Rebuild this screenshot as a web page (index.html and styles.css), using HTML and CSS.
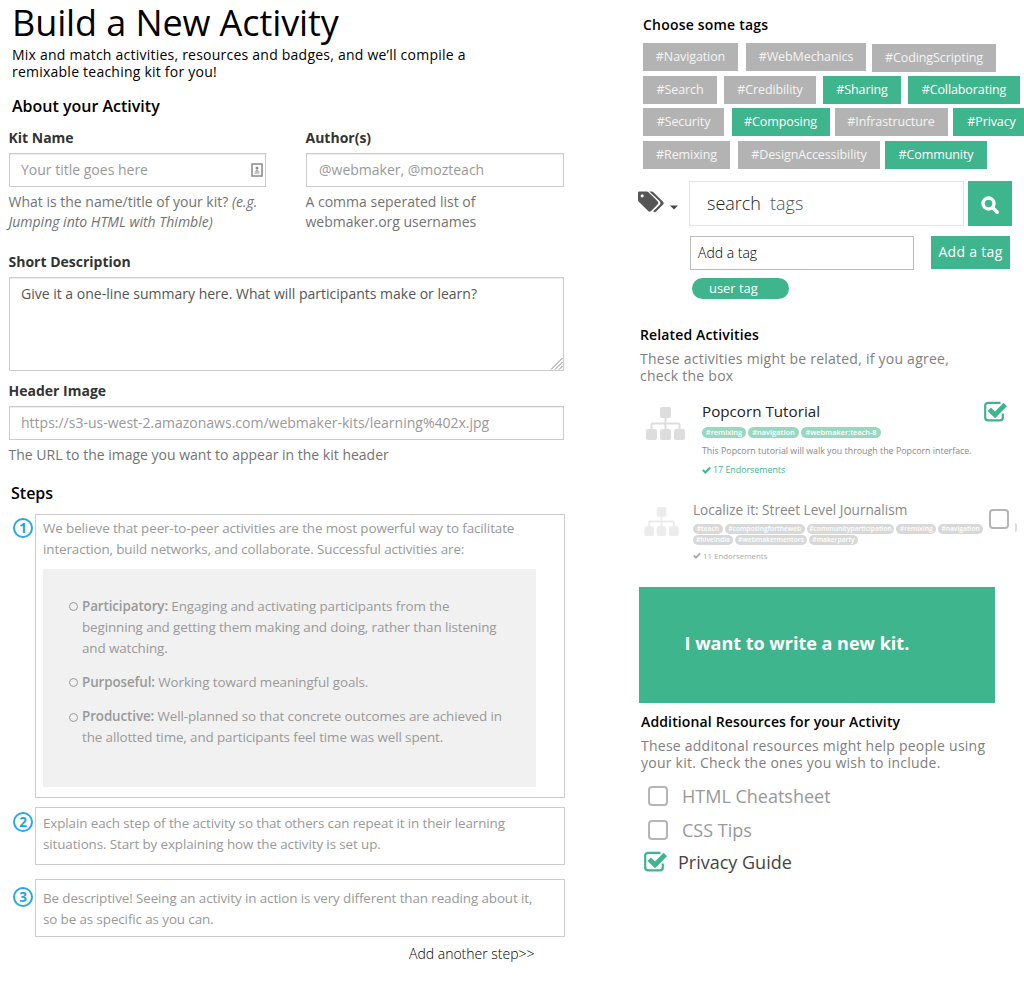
FILE: index.html
```html
<!DOCTYPE html>
<html lang="en">
<head>
<meta charset="utf-8">
<title>Build a New Activity</title>
<link rel="stylesheet" href="styles.css">
</head>
<body>
<svg class="defs" width="0" height="0" aria-hidden="true">
  <symbol id="sitemap" viewBox="0 0 39 33">
    <rect x="14" y="0" width="11" height="11" rx="2"/><rect x="0" y="22" width="11" height="11" rx="2"/><rect x="14" y="22" width="11" height="11" rx="2"/><rect x="28" y="22" width="11" height="11" rx="2"/>
    <path d="M19.500 10v13M5.500 23v-5.500q0-1 1-1h26q1 0 1 1v5.500" fill="none" stroke="currentColor" stroke-width="2"/>
  </symbol>
  <symbol id="checked" viewBox="0 0 24 21">
    <path d="M16.500 1.800H4.200Q1.200 1.800 1.200 4.600v11.900q0 2.800 3 2.800h11.800q2.800 0 2.800-2.800V12.500" fill="none" stroke="currentColor" stroke-width="2.200"/>
    <path d="M5.300 8.300L11 13.900 21.300 3.500" fill="none" stroke="currentColor" stroke-width="4.700"/>
  </symbol>
  <symbol id="tick" viewBox="0 0 8 7"><path d="M.8 3.500L3 5.700 7.200 1.300" fill="none" stroke="currentColor" stroke-width="1.800"/></symbol>
</svg>
<div class="page">
  <main class="builder">
    <h1 class="title">Build a New Activity</h1>
    <p class="intro">Mix and match activities, resources and badges, and we’ll compile a<br>remixable teaching kit for you!</p>
    <h2 class="section about">About your Activity</h2>
    <div class="field-row">
      <div class="field">
        <label class="label">Kit Name</label>
        <div class="input">Your title goes here
          <svg class="card-icon" width="12" height="14" viewBox="0 0 12 14"><rect x="1" y="1" width="10" height="12" fill="none" stroke="#888" stroke-width="1.500"/><circle cx="6" cy="5" r="1.500" fill="#888"/><path d="M3.500 8.500q2.500-3 5 0zM3.500 9.500h5v1h-5z" fill="#888"/></svg>
        </div>
        <p class="help">What is the name/title of your kit? <em>(e.g.<br>Jumping into HTML with Thimble)</em></p>
      </div>
      <div class="field author">
        <label class="label">Author(s)</label>
        <div class="input">@webmaker, @mozteach</div>
        <p class="help">A comma seperated list of<br>webmaker.org usernames</p>
      </div>
    </div>
    <div class="field summary">
      <label class="label">Short Description</label>
      <div class="input textarea">Give it a one-line summary here. What will participants make or learn?
        <svg class="grip" width="13" height="13" viewBox="0 0 13 13"><path d="M1 12.500L12.500 1M5 12.500L12.500 5M9 12.500L12.500 9" stroke="#888" fill="none"/></svg>
      </div>
    </div>
    <div class="field header-image">
      <label class="label">Header Image</label>
      <div class="input">https://s3-us-west-2.amazonaws.com/webmaker-kits/learning%402x.jpg</div>
      <p class="help">The URL to the image you want to appear in the kit header</p>
    </div>
    <h2 class="section steps-title">Steps</h2>
    <div class="steps">
      <div class="step first">
        <span class="num">1</span>
        <div class="step-box">
          <p>We believe that peer-to-peer activities are the most powerful way to facilitate<br>interaction, build networks, and collaborate. Successful activities are:</p>
          <ul class="traits">
            <li><b>Participatory:</b> Engaging and activating participants from the<br>beginning and getting them making and doing, rather than listening<br>and watching.</li>
            <li><b>Purposeful:</b> Working toward meaningful goals.</li>
            <li><b>Productive:</b> Well-planned so that concrete outcomes are achieved in<br>the allotted time, and participants feel time was well spent.</li>
          </ul>
        </div>
      </div>
      <div class="step second">
        <span class="num">2</span>
        <div class="step-box"><p>Explain each step of the activity so that others can repeat it in their learning<br>situations. Start by explaining how the activity is set up.</p></div>
      </div>
      <div class="step third">
        <span class="num">3</span>
        <div class="step-box"><p>Be descriptive! Seeing an activity in action is very different than reading about it,<br>so be as specific as you can.</p></div>
      </div>
    </div>
    <a class="add-step">Add another step&gt;&gt;</a>
  </main>

  <aside class="side">
    <h3 class="side-title choose">Choose some tags</h3>
    <div class="tags">
      <div class="tag-row top"><span class="tag w95">#Navigation</span><span class="tag w120">#WebMechanics</span><span class="tag w124">#CodingScripting</span></div>
      <div class="tag-row"><span class="tag w74">#Search</span><span class="tag w92">#Credibility</span><span class="tag w78 on">#Sharing</span><span class="tag w112 on">#Collaborating</span></div>
      <div class="tag-row"><span class="tag w81">#Security</span><span class="tag w98 on">#Composing</span><span class="tag w113">#Infrastructure</span><span class="tag w78 on privacy">#Privacy</span></div>
      <div class="tag-row last"><span class="tag w87">#Remixing</span><span class="tag w142">#DesignAccessibility</span><span class="tag w102 on">#Community</span></div>
    </div>
    <div class="search">
      <svg class="tags-icon" width="41" height="24" viewBox="0 0 41 24">
        <path d="M1.300 1.500Q0 1.500 0 2.800v7q0 1 .8 1.900l9.400 9.400q1.400 1.400 2.800 0l6.800-6.800q1.400-1.400 0-2.800l-9.300-9.200Q9.700 1.500 8.700 1.500zM4.200 4.200a1.500 1.500 0 1 1 0 3.200a1.500 1.500 0 1 1 0-3.200z" fill="#555" fill-rule="evenodd"/>
        <path d="M11.300 1.500h2.400q1 0 1.700.7l9.700 9.500q1.400 1.400 0 2.800l-7 7q-1.200 1.200-2.500.1l-.4-.4 6.300-6.200q2-2 0-3.900z" fill="#555"/>
        <path d="M32 15.500h8l-4 4z" fill="#444"/>
      </svg>
      <div class="search-input"><span>search</span><span class="dim">tags</span></div>
      <div class="search-btn"><svg width="19" height="19" viewBox="0 0 19 19"><circle cx="7.500" cy="7.500" r="5.500" fill="none" stroke="#fff" stroke-width="3.400"/><path d="M11.500 11.500l4.700 4.700" stroke="#fff" stroke-width="3.600" stroke-linecap="round"/></svg></div>
    </div>
    <div class="add-tag"><div class="add-input">Add a tag</div><div class="add-btn">Add a tag</div></div>
    <span class="user-tag">user tag</span>

    <h3 class="side-title related">Related Activities</h3>
    <p class="side-text">These activities might be related, if you agree,<br>check the box</p>
    <article class="activity one">
      <svg class="map" width="39" height="33"><use href="#sitemap"/></svg>
      <div class="info">
        <h4 class="act-title">Popcorn Tutorial</h4>
        <div class="pills"><span class="p44">#remixing</span><span class="p51">#navigation</span><span class="p80">#webmaker:teach-8</span></div>
        <p class="act-text">This Popcorn tutorial will walk you through the Popcorn interface.</p>
        <p class="endorse"><svg width="9" height="8"><use href="#tick"/></svg>17 Endorsements</p>
      </div>
      <svg class="check" width="24" height="21"><use href="#checked"/></svg>
    </article>
    <article class="activity two">
      <svg class="map" width="35" height="29"><use href="#sitemap"/></svg>
      <div class="info">
        <h4 class="act-title">Localize it: Street Level Journalism</h4>
        <div class="pills"><span class="p30">#teach</span><span class="p80">#composingfortheweb</span><span class="p88">#communityparticipation</span><span class="p40">#remixing</span><span class="p45">#navigation</span></div>
        <div class="pills"><span class="p40">#hiveindia</span><span class="p72">#webmakermentors</span><span class="p49">#makerparty</span></div>
        <p class="endorse"><svg width="8" height="7"><use href="#tick"/></svg>11 Endorsements</p>
      </div>
      <span class="box"></span>
      <span class="pill-edge"></span>
    </article>
    <div class="cta">I want to write a new kit.</div>
    <h3 class="side-title extra">Additional Resources for your Activity</h3>
    <p class="side-text resources">These additonal resources might help people using<br>your kit. Check the ones you wish to include.</p>
    <ul class="options">
      <li><span class="box"></span>HTML Cheatsheet</li>
      <li><span class="box"></span>CSS Tips</li>
      <li class="picked"><svg class="check" width="24" height="21"><use href="#checked"/></svg>Privacy Guide</li>
    </ul>
  </aside>
</div>
</body>
</html>
```
FILE: styles.css
```css
* { box-sizing: border-box; }
body { margin: 0; background: #fff; font-family: "Open Sans", "Noto Sans", sans-serif; color: #000; }
h1, h2, h3, h4, p, ul { margin: 0; padding: 0; font-weight: 400; }
ul { list-style: none; }
svg { display: block; fill: currentColor; flex: none; }
.defs { position: absolute; }
.page { display: flex; gap: 74px; width: 1024px; height: 1000px; overflow: hidden; white-space: nowrap; }
.builder { width: 565px; flex: none; }
.side { width: 385px; flex: none; }

.title { font-size: 36px; line-height: 46px; letter-spacing: -.1px; padding-left: 12px; }
.intro { font-size: 14px; line-height: 17px; letter-spacing: .23px; padding-left: 12px; }
.section { font-size: 16px; line-height: 22px; font-weight: 600; }
.about { padding: 15px 0 0 12px; }
.field-row { display: flex; gap: 40px; padding: 11px 0 0 9px; }
.field-row .field { width: 257px; }
.field-row .author { width: 258px; }
.label { display: block; font-size: 14px; line-height: 20px; font-weight: 700; color: #333; margin: 0 0 5px -.5px; }
.input { position: relative; height: 34px; border: 1px solid #ccc; box-shadow: inset 0 1px 1px rgba(0,0,0,.075); font-size: 14px; line-height: 20px; padding: 6px 11px; color: #999; }
.author .input { padding-left: 12px; }
.textarea { height: 94px; color: #555; }
.card-icon { position: absolute; right: 2px; top: 9px; }
.grip { position: absolute; right: 0; bottom: 0; }
.help { font-size: 14px; line-height: 20px; color: #737373; margin: 5px 0 0 -.5px; }
.summary { margin: 20px 1px 0 9px; }
.header-image { margin: 10px 1px 0 9px; }
.steps-title { padding: 17px 0 0 11px; }

.steps { padding: 10px 0 0 13px; }
.step { display: flex; gap: 2px; }
.num { width: 20px; height: 20px; border: 2px solid #2aa9e1; border-radius: 50%; color: #1ea5e0; font-size: 13.500px; line-height: 16px; font-weight: 700; text-align: center; margin-top: 4px; }
.step-box { width: 530px; border: 1px solid #ccc; padding: 3px 7px; font-size: 13.400px; line-height: 21px; letter-spacing: -.1px; color: #999; }
.step-box b { font-weight: 600; }
.first .step-box { height: 284px; }
.second { margin-top: 9px; }
.second .step-box, .third .step-box { height: 58px; }
.second .step-box { padding-top: 4.500px; }
.third { margin-top: 14px; }
.third .step-box { padding-top: 7.500px; }
.third .num { margin-top: 8px; }
.second .num { margin-top: 5px; }
.traits { display: flex; flex-direction: column; gap: 13.300px; width: 493px; height: 218px; background: #f1f1f1; margin-top: 9px; padding: 26.700px 0 0 39px; }
.traits li { position: relative; }
.traits li::before { content: ""; position: absolute; left: -13px; top: 6.500px; width: 7px; height: 7px; border: 1px solid #999; border-radius: 50%; }
.add-step { display: block; font-size: 14px; line-height: 20px; font-weight: 300; margin: 7px 0 0 409px; }

.side-title { font-size: 14px; line-height: 20px; font-weight: 600; letter-spacing: .14px; }
.choose { padding: 15px 0 0 4px; letter-spacing: .2px; }
.tags { display: flex; flex-direction: column; gap: 4.500px; padding: 8px 0 0 4px; }
.tag-row { display: flex; gap: 7px; }
.tag-row.top, .tag-row.last { gap: 8px; }
.tag { height: 28px; flex: none; background: #b3b3b3; color: #f5f5f5; font-size: 12.500px; letter-spacing: -.1px; line-height: 28px; text-align: center; }
.on { background: #3fb58e; color: #fff; }
.w74 { width: 74px; } .w78 { width: 78px; } .w81 { width: 81px; } .w87 { width: 87px; } .w92 { width: 92px; } .w95 { width: 95px; } .w98 { width: 98px; } .w102 { width: 102px; } .w112 { width: 112px; } .w113 { width: 113px; } .w120 { width: 120px; } .w124 { width: 124px; } .w142 { width: 142px; }
.w98 { margin-left: .5px; }
.w124 { margin: 1px 0 -1px -2px; }
.w113, .privacy { margin-left: -2px; }
.w102 { margin-left: -3px; }
.search { display: flex; padding-top: 12px; }
.tags-icon { margin: 9px 9px 0 -1px; }
.search-input { width: 275px; height: 45px; margin-left: 1px; border: 1px solid #dde6ec; padding-left: 17px; font-size: 18px; line-height: 43px; font-weight: 300; color: #222; display: flex; gap: 9px; }
.dim { color: #555; }
.search-btn { width: 44px; height: 45px; margin-left: 4px; background: #3fb58e; display: flex; padding: 15px 0 0 13px; }
.add-tag { display: flex; gap: 17px; padding: 10px 0 0 51px; font-size: 14px; }
.add-input { width: 224px; height: 34px; border: 1px solid #bbb; line-height: 31px; padding-left: 7px; font-weight: 300; }
.add-btn { width: 79px; height: 33px; background: #3fb58e; color: #fff; line-height: 32px; text-align: center; letter-spacing: .3px; }
.user-tag { display: block; width: 97px; height: 21px; border-radius: 11px; margin: 8px 0 0 53px; padding-left: 17px; background: #3fb58e; color: #fff; font-size: 12.900px; line-height: 20px; }
.related { padding: 26px 0 0 1px; }
.side-text { font-size: 14px; line-height: 17px; letter-spacing: .24px; color: #808080; padding: 5px 0 0 1px; }
.activity { display: flex; color: #ddd; }
.one { height: 97px; padding: 17px 0 0 7px; }
.one .map { margin-top: 6px; }
.one .info { width: 282px; margin-left: 17px; }
.act-title { font-size: 15.200px; line-height: 20px; color: #222; }
.pills { display: flex; gap: 2px; margin-top: 6px; }
.pills span { height: 11px; border-radius: 6px; background: #98d8c0; color: #fff; font-size: 7.400px; line-height: 11px; font-weight: 600; text-align: center; }
.p30 { width: 30px; } .p40 { width: 40px; } .p44 { width: 44px; } .p45 { width: 45px; } .p49 { width: 49px; } .p51 { width: 51px; } .p72 { width: 72px; } .p80 { width: 80px; } .p88 { width: 88px; }
.act-text { font-size: 8.850px; line-height: 12px; color: #888; margin-top: 7px; }
.endorse { display: flex; gap: 2px; align-items: center; font-size: 8.850px; line-height: 12px; color: #3fb58e; margin-top: 7px; }
.check { color: #3fb58e; }
.two { height: 106px; padding: 19px 0 0 5px; }
.two .info { width: 290px; margin: 0 0 0 14px; }
.two .map { color: #ececec; margin-top: 7px; }
.two .act-title { font-size: 13.600px; color: #888; }
.two .pills { margin-top: 4px; }
.two .pills + .pills { margin-top: 1px; }
.two .pills span { height: 10px; line-height: 10px; background: #d8d8d8; font-size: 6.700px; }
.two .endorse { font-size: 7.900px; color: #aaa; margin-top: 5px; }
.box { width: 20px; height: 20px; flex: none; border: 2px solid #b5b5b5; border-radius: 4px; }
.two .box { margin: 9px 0 0 6px; }
.pill-edge { width: 2px; height: 9px; background: #ddd; border-radius: 0 5px 5px 0; margin: 23px 0 0 6px; }
.cta { width: 356px; height: 116px; background: #3fb58e; color: #fff; font-size: 18px; line-height: 113px; font-weight: 700; padding-left: 45.500px; }
.extra { padding: 9px 0 0 2px; }
.resources { padding-left: 2px; }
.options { padding: 8px 0 0 5px; font-size: 18px; line-height: 24px; color: #999; }
.options li { display: flex; height: 34px; align-items: center; padding-left: 4px; gap: 14px; }
.options .picked { color: #444; height: 30px; padding-left: 0; gap: 10px; }
```
